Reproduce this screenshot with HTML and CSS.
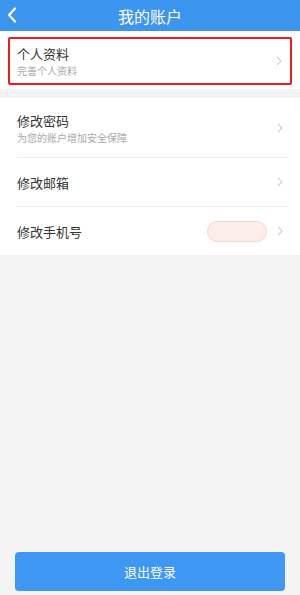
FILE: index.html
```html
<!DOCTYPE html>
<html lang="zh">
<head>
<meta charset="utf-8">
<link rel="stylesheet" href="styles.css">
</head>
<body>
<div class="page">
  <header class="topbar">
    <svg class="back" width="10" height="16" viewBox="0 0 10 16"><path d="M8 1.5 L2 8 L8 14.5" fill="none" stroke="#fff" stroke-width="2.2" stroke-linecap="round" stroke-linejoin="round"/></svg>
    <h1 class="title">我的账户</h1>
  </header>

  <section class="card first">
    <div class="row highlight">
      <div class="texts">
        <div class="label">个人资料</div>
        <div class="sub">完善个人资料</div>
      </div>
      <svg class="chev" width="6" height="10" viewBox="0 0 6 10"><path d="M1 1 L5 5 L1 9" fill="none" stroke="#d2d2d2" stroke-width="1.2"/></svg>
    </div>
  </section>

  <section class="card list">
    <div class="row tall">
      <div class="texts">
        <div class="label">修改密码</div>
        <div class="sub">为您的账户增加安全保障</div>
      </div>
      <svg class="chev" width="6" height="10" viewBox="0 0 6 10"><path d="M1 1 L5 5 L1 9" fill="none" stroke="#d2d2d2" stroke-width="1.2"/></svg>
    </div>
    <div class="row">
      <div class="texts"><div class="label">修改邮箱</div></div>
      <svg class="chev" width="6" height="10" viewBox="0 0 6 10"><path d="M1 1 L5 5 L1 9" fill="none" stroke="#d2d2d2" stroke-width="1.2"/></svg>
    </div>
    <div class="row">
      <div class="texts"><div class="label">修改手机号</div></div>
      <span class="pill"></span>
      <svg class="chev" width="6" height="10" viewBox="0 0 6 10"><path d="M1 1 L5 5 L1 9" fill="none" stroke="#d2d2d2" stroke-width="1.2"/></svg>
    </div>
  </section>

  <div class="footer">
    <button class="logout">退出登录</button>
  </div>
</div>
</body>
</html>
```

FILE: styles.css
```css
* { box-sizing: border-box; }
html, body { margin: 0; padding: 0; }
body {
  background: #f3f3f3;
  font-family: "Noto Sans CJK SC", "Noto Sans", sans-serif;
  color: #333;
}
.page {
  height: 595px;
  display: flex;
  flex-direction: column;
}
.topbar {
  height: 31px;
  background: #3c95ee;
  display: flex;
  align-items: center;
  justify-content: center;
  position: relative;
}
.back {
  position: absolute;
  left: 7px;
  top: 7px;
}
.title {
  margin: 0;
  font-size: 16px;
  font-weight: normal;
  color: #fff;
  line-height: 24px;
}
.card {
  background: #fff;
}
.card.first {
  padding: 6px 8px 4px 8px;
}
.row {
  display: flex;
  align-items: center;
}
.highlight {
  height: 48px;
  border: 2px solid #ec1c1c;
  border-radius: 2px;
  padding: 0 8px 0 7px;
}
.texts {
  flex: 1;
  display: flex;
  flex-direction: column;
}
.label {
  font-size: 13px;
  line-height: normal;
  color: #333;
}
.sub {
  font-size: 10px;
  line-height: normal;
  color: #a8a8a8;
}
.chev { flex: none; }
.list {
  margin-top: 9px;
  padding: 0 12px 0 17px;
}
.list .row {
  height: 49px;
  border-bottom: 1px solid #ececec;
  padding-right: 5px;
}
.list .row.tall { height: 60px; }
.list .row:last-child { border-bottom: none; height: 48px; }
.pill {
  width: 60px;
  height: 21px;
  border-radius: 11px;
  background: #fdeeea;
  border: 1px solid #f6d3c9;
  margin-right: 10px;
}
.footer {
  margin-top: auto;
  padding: 0 15px 4px 15px;
}
.logout {
  width: 100%;
  height: 39px;
  border: none;
  border-radius: 4px;
  background: #3d97f3;
  color: #fff;
  font-family: inherit;
  font-size: 13px;
}
```
